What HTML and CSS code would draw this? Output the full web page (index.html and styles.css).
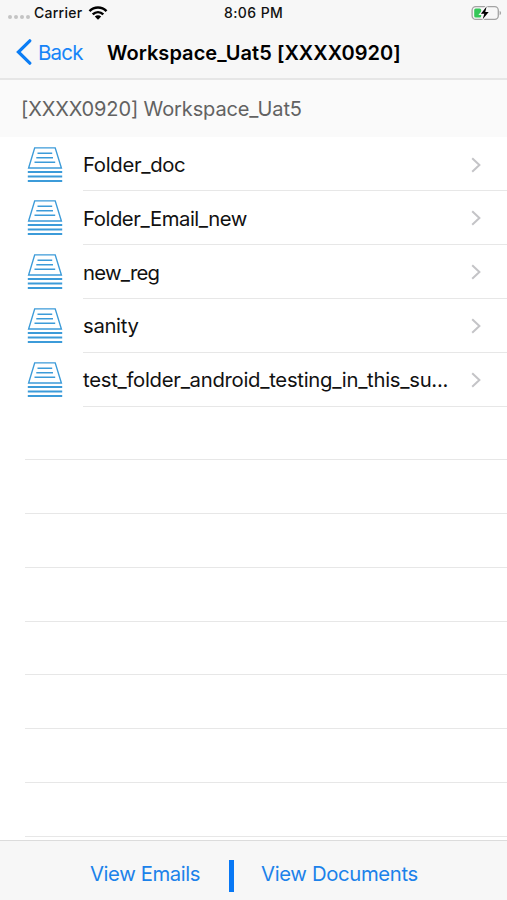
FILE: index.html
```html
<!DOCTYPE html>
<html lang="en">
<head>
<meta charset="utf-8">
<title>Workspace</title>
<link rel="stylesheet" href="styles.css">
</head>
<body>
<svg class="defs" width="0" height="0">
  <symbol id="stack" viewBox="0 0 36 36">
    <path d="M7.7 .9H28.2L34.4 21H1.6Z" stroke-width="1.4"/>
    <path d="M10.5 6.3H25.2M9.3 10.8H26M7.5 15.3H28.2" stroke-width="1.5"/>
    <path d="M.8 25H35.2M.8 29.5H35.2M.8 34H35.2" stroke-width="1.8"/>
  </symbol>
  <symbol id="chevron" viewBox="0 0 10 16"><path d="M1.2 1.2L8.4 8L1.2 14.8" stroke-width="2"/></symbol>
</svg>
<div class="screen">
  <header class="top">
    <div class="status">
      <span class="signal"><i></i><i></i><i></i><i></i></span>
      <span class="carrier">Carrier</span>
      <svg class="wifi" viewBox="0 0 20 14"><path d="M1.5 5.2C6.3.4 13.7.4 18.5 5.2M4.7 8.4C7.8 5.4 12.2 5.4 15.3 8.4" fill="none" stroke="#000" stroke-width="2.5"/><path d="M6.8 10.5C8.7 8.8 11.3 8.8 13.2 10.5L10 13.7Z"/></svg>
      <span class="time">8:06 PM</span>
      <svg class="battery" viewBox="0 0 32 16"><rect x="1.1" y="1.6" width="26.2" height="12.8" rx="3.6" fill="none" stroke="#a3a3a3" stroke-width="1.3"/><rect x="3.2" y="3.6" width="7" height="8.8" rx="1.5" fill="#35c759"/><path d="M28.6 5.8C30.6 6.6 30.6 9.4 28.6 10.2Z" fill="#a3a3a3"/><path d="M15.6 1.5L9.9 8.7H13.3L11.7 14.3L17.7 7H14.3Z" stroke="#f7f7f7" stroke-width="2.4" paint-order="stroke"/></svg>
    </div>
    <nav class="nav">
      <svg class="back-arrow" viewBox="0 0 16 26"><path d="M13.8 1.8L2.4 13L13.8 24.2" fill="none" stroke="#0b7df5" stroke-width="3.2" stroke-linecap="round"/></svg>
      <a class="back">Back</a>
      <h1>Workspace_Uat5 [XXXX0920]</h1>
    </nav>
  </header>
  <h2>[XXXX0920] Workspace_Uat5</h2>
  <main class="list">
    <div class="row"><svg class="icon"><use href="#stack"/></svg><div class="cell"><span>Folder_doc</span><svg class="chev"><use href="#chevron"/></svg></div></div>
    <div class="row"><svg class="icon"><use href="#stack"/></svg><div class="cell"><span class="tight">Folder_Email_new</span><svg class="chev"><use href="#chevron"/></svg></div></div>
    <div class="row"><svg class="icon"><use href="#stack"/></svg><div class="cell"><span class="tighter">new_reg</span><svg class="chev"><use href="#chevron"/></svg></div></div>
    <div class="row"><svg class="icon"><use href="#stack"/></svg><div class="cell"><span>sanity</span><svg class="chev"><use href="#chevron"/></svg></div></div>
    <div class="row"><svg class="icon"><use href="#stack"/></svg><div class="cell"><span class="long">test_folder_android_testing_in_this_su...</span><svg class="chev"><use href="#chevron"/></svg></div></div>
    <div class="empty"></div><div class="empty"></div><div class="empty"></div><div class="empty"></div>
    <div class="empty"></div><div class="empty"></div><div class="empty"></div><div class="empty"></div>
  </main>
  <footer class="toolbar"><a class="emails">View Emails</a><span class="bar"></span><a class="docs">View Documents</a></footer>
</div>
</body>
</html>
```
FILE: styles.css
```css
* { box-sizing: border-box; }
body { margin: 0; background: #fff; font-family: Inter, "Liberation Sans", sans-serif; color: #111; }
.defs { display: block; position: absolute; }
.screen { width: 507px; height: 900px; display: flex; flex-direction: column; overflow: hidden; }
svg { flex: none; }
.top { height: 80px; flex: none; background: #f7f7f7; border-bottom: 2px solid #e6e6e6; }
.status { height: 26px; display: flex; align-items: center; padding-left: 8px; font-size: 14px; font-weight: 500; white-space: nowrap; }
.signal { display: flex; gap: 2px; width: 26px; padding-top: 7px; }
.signal i { width: 4px; height: 4px; border-radius: 50%; background: #c4c4c4; }
.carrier { width: 54px; letter-spacing: .25px; }
.wifi { width: 20px; height: 14px; }
.carrier, .time { padding-bottom: 1px; }
.time { margin-left: 116px; width: 247px; letter-spacing: .4px; }
.battery { width: 32px; height: 16px; }
.nav { height: 52px; display: flex; align-items: center; padding-left: 16px; white-space: nowrap; }
.back-arrow { width: 16px; height: 26px; margin-right: 6px; }
.back { width: 69px; font-size: 20.5px; letter-spacing: -.8px; color: #1684f8; padding-top: 1px; }
h1 { margin: 0; padding-top: 1px; font-size: 20px; font-weight: 600; letter-spacing: .04px; color: #000; }
h2 { margin: 0; height: 57px; flex: none; padding-left: 21px; background: #fafafa; font-size: 20px; font-weight: 400; line-height: 58px; letter-spacing: -.12px; color: #626262; white-space: nowrap; }
.list { flex: 1; min-height: 0; padding-top: .7px; overflow: hidden; }
.row { height: 53.78px; display: flex; }
.icon { width: 36px; height: 36px; margin: 9px 20px 0 27px; fill: none; stroke: #3c9bd9; }
.cell { flex: 1; display: flex; align-items: center; justify-content: space-between; border-bottom: 1px solid #e7e7e7; padding: 1.2px 26px 0 0; font-size: 20.3px; letter-spacing: -.32px; white-space: nowrap; }
.tight { letter-spacing: -.45px; }
.tighter { letter-spacing: -.75px; }
.long { letter-spacing: -.28px; }
.chev { width: 10px; height: 16px; fill: none; stroke: #c4c4c7; }
.empty { height: 53.78px; margin-left: 25px; border-bottom: 1px solid #e7e7e7; }
.toolbar { height: 60px; flex: none; display: flex; align-items: center; padding: 6px 0 0 90px; background: #f7f7f7; border-top: 1px solid #dcdcdc; font-size: 20.3px; letter-spacing: -.4px; color: #1c82ea; white-space: nowrap; }
.emails { width: 139px; }
.bar { width: 5px; height: 32px; margin-right: 27px; margin-top: 4px; background: #0878f5; }
.docs { letter-spacing: -.35px; }
```
